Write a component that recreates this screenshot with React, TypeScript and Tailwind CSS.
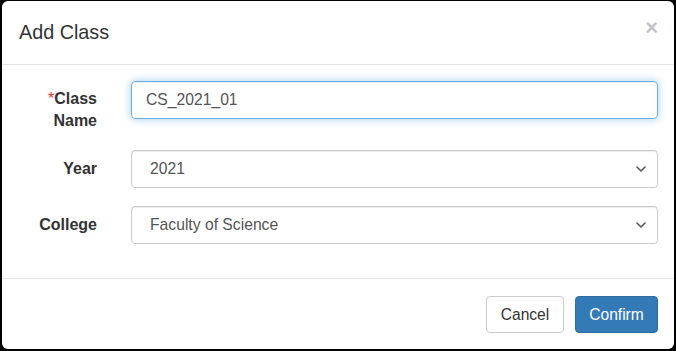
import React, { useState } from 'react';

const years = ['2019', '2020', '2021', '2022'];
const colleges = ['Faculty of Science', 'Faculty of Arts', 'Faculty of Engineering'];

const Chevron = () => (
  <svg width="10" height="6" viewBox="0 0 10 6" className="pointer-events-none absolute right-[12px] top-1/2 -translate-y-1/2">
    <path d="M1 1 L5 5 L9 1" fill="none" stroke="#555" strokeWidth="1.6" strokeLinecap="round" strokeLinejoin="round" />
  </svg>
);

export default function App() {
  const [name, setName] = useState('CS_2021_01');
  const [year, setYear] = useState('2021');
  const [college, setCollege] = useState('Faculty of Science');

  return (
    <div className="w-[676px] h-[351px] bg-black pt-[1px] px-[2px] pb-[2px] font-['Liberation_Sans',Arial,sans-serif]">
      <div className="h-full bg-white rounded-[6px] flex flex-col">
        {/* Header */}
        <div className="h-[64px] border-b border-[#e5e5e5] flex items-center justify-between pl-[17px] pr-[16px]">
          <h4 className="text-[19.8px] text-[#333] leading-none pt-[1px]">Add Class</h4>
          <button className="text-[#c4c4c4] text-[22px] font-bold leading-none -mt-[10px]">×</button>
        </div>

        {/* Body */}
        <div className="pt-[16px] pb-[17px] pr-[16px] flex flex-col gap-[18px]">
          <div className="flex">
            <label className="w-[95px] shrink-0 text-right text-[16px] font-bold text-[#333] leading-[22px] pt-[7px] pl-[40px]">
              <span className="text-[#e33] font-normal">*</span>Class Name
            </label>
            <div className="ml-[34px] flex-1">
              <input
                value={name}
                onChange={e => setName(e.target.value)}
                className="w-full h-[38px] rounded-[4px] border border-[#66afe9] px-[14px] text-[15.7px] text-[#555] outline-none shadow-[inset_0_1px_1px_rgba(0,0,0,0.075),0_0_8px_rgba(102,175,233,0.6)]"
              />
            </div>
          </div>

          <div className="flex items-center">
            <label className="w-[95px] shrink-0 text-right text-[16px] font-bold text-[#333]">Year</label>
            <div className="ml-[34px] flex-1 relative">
              <select
                value={year}
                onChange={e => setYear(e.target.value)}
                className="appearance-none w-full h-[38px] rounded-[4px] border border-[#ccc] pl-[18px] text-[15.7px] text-[#555] bg-white outline-none shadow-[inset_0_1px_1px_rgba(0,0,0,0.075)]"
              >
                {years.map(y => <option key={y}>{y}</option>)}
              </select>
              <Chevron />
            </div>
          </div>

          <div className="flex items-center">
            <label className="w-[95px] shrink-0 text-right text-[16px] font-bold text-[#333]">College</label>
            <div className="ml-[34px] flex-1 relative">
              <select
                value={college}
                onChange={e => setCollege(e.target.value)}
                className="appearance-none w-full h-[38px] rounded-[4px] border border-[#ccc] pl-[18px] text-[15.7px] text-[#555] bg-white outline-none shadow-[inset_0_1px_1px_rgba(0,0,0,0.075)]"
              >
                {colleges.map(c => <option key={c}>{c}</option>)}
              </select>
              <Chevron />
            </div>
          </div>
        </div>

        {/* Footer */}
        <div className="mt-auto border-t border-[#e5e5e5] flex justify-end gap-[11px] pt-[17px] pb-[16px] pr-[16px]">
          <button className="h-[37px] w-[78px] rounded-[4px] border border-[#ccc] bg-white text-[15.6px] text-[#333]">Cancel</button>
          <button className="h-[37px] w-[83px] rounded-[4px] border border-[#2e6da4] bg-[#337ab7] text-[15.6px] text-white">Confirm</button>
        </div>
      </div>
    </div>
  );
}
